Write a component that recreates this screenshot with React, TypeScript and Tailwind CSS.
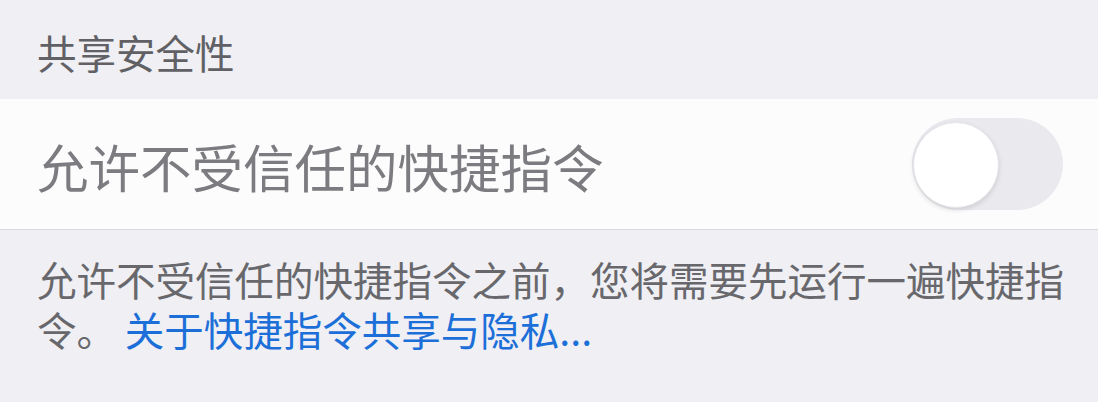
import React, { useState } from 'react';

const Toggle: React.FC<{ on: boolean; onChange: (v: boolean) => void }> = ({ on, onChange }) => (
  <button
    type="button"
    onClick={() => onChange(!on)}
    className={`relative w-[151px] h-[92px] rounded-full shrink-0 ${on ? 'bg-[#4cd964]' : 'bg-[#e9e9ee]'}`}
  >
    <span
      className={`absolute top-[4px] w-[86px] h-[86px] rounded-full bg-white border border-[#e6e6ea] shadow-[0_2px_5px_rgba(0,0,0,0.12)] ${
        on ? 'left-[61px]' : 'left-[1px]'
      }`}
    />
  </button>
);

export default function App() {
  const [allowUntrusted, setAllowUntrusted] = useState(false);

  return (
    <div className="w-[1098px] h-[402px] bg-[#efeff4] font-['Noto_Sans_CJK_SC',sans-serif] overflow-hidden">
      <div className="h-[99px] px-[37px] pt-[32px] text-[39.5px] leading-[40px] text-[#616165]">
        共享安全性
      </div>

      <div className="h-[131px] bg-[#fcfcfd] border-b border-[#d9d9de] flex items-center justify-between pl-[37px] pr-[35px]">
        <span className="text-[51.5px] leading-[56px] text-[#7c7c80] pt-[4px]">允许不受信任的快捷指令</span>
        <Toggle on={allowUntrusted} onChange={setAllowUntrusted} />
      </div>

      <p className="pl-[37px] pr-[30px] pt-[24px] text-[39.5px] leading-[50px] text-[#68686c]">
        允许不受信任的快捷指令之前，您将需要先运行一遍快捷指令。{' '}
        <a className="text-[#1c6fd8]">关于快捷指令共享与隐私...</a>
      </p>
    </div>
  );
}
